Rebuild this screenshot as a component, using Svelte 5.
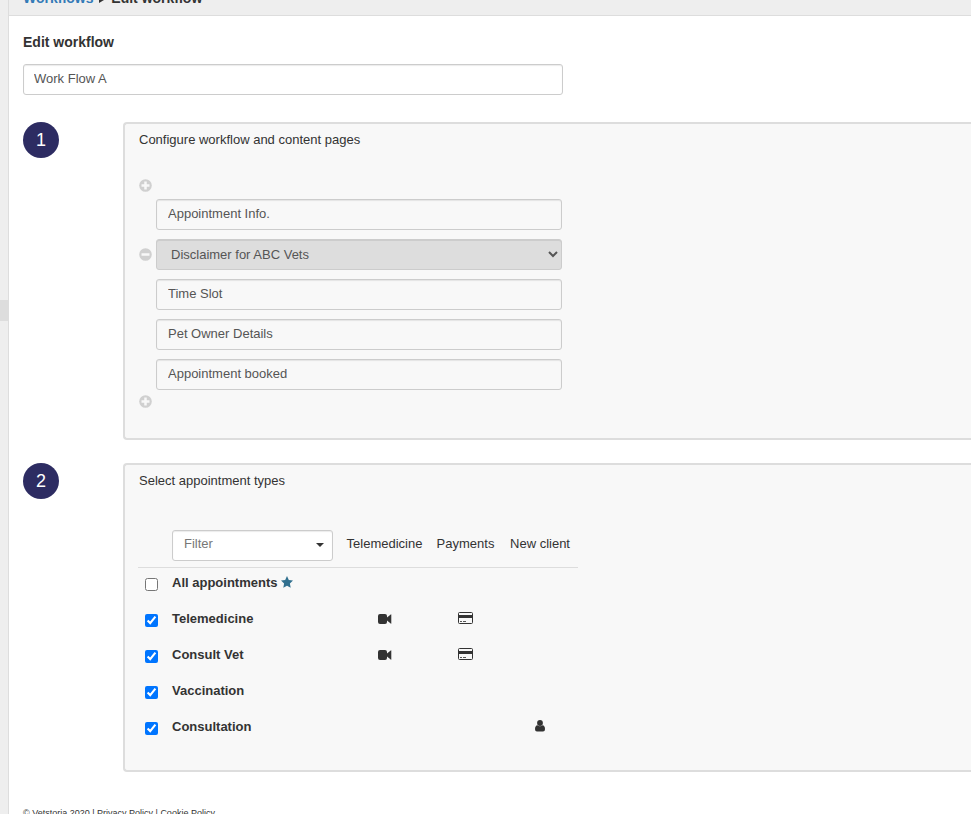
<script lang="ts">
  interface Step { label: string; editable?: boolean; }
  interface AppointmentType { name: string; checked: boolean; star?: boolean; video?: boolean; card?: boolean; newClient?: boolean; }

  let name = $state('Work Flow A');
  let filter = $state('');

  const steps: Step[] = [
    { label: 'Appointment Info.' },
    { label: 'Disclaimer for ABC Vets', editable: true },
    { label: 'Time Slot' },
    { label: 'Pet Owner Details' },
    { label: 'Appointment booked' },
  ];

  let types: AppointmentType[] = $state([
    { name: 'All appointments', checked: false, star: true },
    { name: 'Telemedicine', checked: true, video: true, card: true },
    { name: 'Consult Vet', checked: true, video: true, card: true },
    { name: 'Vaccination', checked: true },
    { name: 'Consultation', checked: true, newClient: true },
  ]);
</script>

{#snippet circle(minus: boolean)}
  <svg width="13" height="13" viewBox="0 0 13 13" aria-hidden="true">
    <circle cx="6.5" cy="6.5" r="6.3" fill="#d0d0d0" />
    <path d={minus ? 'M2.5 6.5h8' : 'M2.5 6.5h8M6.5 2.5v8'} stroke="#f8f8f8" stroke-width="2.5" />
  </svg>
{/snippet}

<div class="page">
  <aside><div class="handle"></div></aside>
  <div class="main">
    <header>
      <nav aria-label="Breadcrumb"><a href="#workflows">Workflows</a> <span class="sep"></span> <span>Edit workflow</span></nav>
    </header>
    <main>
      <h1><label for="name">Edit workflow</label></h1>
      <input id="name" class="control name" type="text" bind:value={name} />

      <section>
        <div class="number">1</div>
        <div class="panel">
          <h2>Configure workflow and content pages</h2>
          <div class="steps">
            <button type="button" aria-label="Add page at start">{@render circle(false)}</button>
            <div class="list">
              {#each steps as step (step.label)}
                <div class="step">
                  {#if step.editable}
                    <button type="button" aria-label="Remove page">{@render circle(true)}</button>
                    <select class="control page-select" aria-label="Content page">
                      <option>{step.label}</option>
                    </select>
                  {:else}
                    <input class="control" type="text" aria-label={step.label} value={step.label} readonly />
                  {/if}
                </div>
              {/each}
            </div>
            <button type="button" aria-label="Add page at end">{@render circle(false)}</button>
          </div>
        </div>
      </section>

      <section>
        <div class="number">2</div>
        <div class="panel">
          <h2>Select appointment types</h2>
          <table>
            <thead>
              <tr>
                <th class="check"></th>
                <th class="type">
                  <div class="filter">
                    <select class="control" aria-label="Filter" bind:value={filter}>
                      <option value="">Filter</option>
                    </select>
                    <svg width="8" height="4" viewBox="0 0 8 4" aria-hidden="true"><path d="M0 0h8L4 4z" fill="#333" /></svg>
                  </div>
                </th>
                <th class="tele">Telemedicine</th>
                <th class="pay">Payments</th>
                <th class="client">New client</th>
              </tr>
            </thead>
            <tbody>
              {#each types as type, i (type.name)}
                <tr>
                  <td class="check"><input id="type-{i}" type="checkbox" bind:checked={type.checked} /></td>
                  <td class="type">
                    <label for="type-{i}">{type.name}</label>
                    {#if type.star}
                      <svg width="12" height="12" viewBox="0 0 12 12" aria-hidden="true">
                        <path d="M6 0l1.8 3.9 4.2.6-3.1 3 .8 4.3L6 9.7l-3.7 2.1.8-4.3L0 4.500l4.200-.6z" fill="#31708f" />
                      </svg>
                    {/if}
                  </td>
                  <td>
                    {#if type.video}
                      <svg width="14" height="10" viewBox="0 0 14 10" role="img" aria-label="Telemedicine">
                        <path d="M2 0h5q2 0 2 2v1.500L12.700.4q.4-.3.6.1V9.500q-.2.500-.6.100L9 6.500V8q0 2-2 2H2Q0 10 0 8V2Q0 0 2 0z" fill="#333" />
                      </svg>
                    {/if}
                  </td>
                  <td class="pay">
                    {#if type.card}
                      <svg width="15" height="12" viewBox="0 0 15 12" role="img" aria-label="Payments">
                        <rect x=".5" y=".5" width="14" height="11" rx="1" fill="none" stroke="#333" />
                        <path d="M1 3h13v3H1z" fill="#333" />
                        <path d="M2 9.500h2M5 9.500h3" stroke="#555" />
                      </svg>
                    {/if}
                  </td>
                  <td class="client">
                    {#if type.newClient}
                      <svg width="10" height="12" viewBox="0 0 10 12" role="img" aria-label="New client">
                        <circle cx="5" cy="3" r="2.900" fill="#333" />
                        <path d="M2.500 5.300Q5 7.400 7.500 5.300 10 5.600 10 9.300q0 2.200-2 2.200H2q-2 0-2-2.200 0-3.700 2.500-4z" fill="#333" />
                      </svg>
                    {/if}
                  </td>
                </tr>
              {/each}
            </tbody>
          </table>
        </div>
      </section>

      <footer>© Vetstoria 2020 | <a href="#privacy">Privacy Policy</a> | <a href="#cookies">Cookie Policy</a></footer>
    </main>
  </div>
</div>

<style>
  :global(body) { margin: 0; }
  .page {
    display: flex; height: 100vh; overflow: hidden; background: #fff;
    font: 13px/18px "Liberation Sans", Arial, sans-serif; color: #333;
  }
  aside { flex: none; width: 8px; padding-top: 300px; background: #eee; border-right: 1px solid #ddd; }
  .handle { height: 21px; background: #ddd; }
  .main { flex: 1; min-width: 0; }

  header {
    display: flex; align-items: flex-end; height: 15px; padding: 0 14px;
    background: #eee; border-bottom: 1px solid #ddd; overflow: hidden;
  }
  nav { flex: none; padding-bottom: 8px; font-size: 14px; font-weight: 700; }
  nav a { color: #337ab7; text-decoration: none; }
  .sep { display: inline-block; margin: 0 3px 0 2px; border: 3px solid transparent; border-left: 5px solid #333; border-right: 0; }

  main { padding: 17px 0 0 14px; }
  h1 { margin: 0 0 13px; font-size: 14px; line-height: 18px; }
  h2 { margin: 0; font-size: 13px; font-weight: 400; line-height: 18px; }

  .control {
    box-sizing: border-box; display: block; width: 100%; height: 31px; margin: 0; padding: 0 11px 3px;
    border: 1px solid #ccc; border-radius: 3px; background: #f8f8f8;
    box-shadow: inset 0 1px 1px rgba(0, 0, 0, 0.08); font: inherit; color: #555;
  }
  .name { max-width: 540px; padding-left: 10px; background: #fff; }

  section { display: flex; align-items: flex-start; gap: 64px; margin-top: 27px; }
  section + section { margin-top: 23px; }
  .number {
    flex: none; width: 36px; border-radius: 50%; background: #2d2c62;
    color: #fff; font-size: 18px; line-height: 36px; text-align: center;
  }
  .panel {
    flex: 1; min-width: 0; padding: 7px 14px 22px;
    background: #f8f8f8; border: 2px solid #ddd; border-right: 0; border-radius: 4px 0 0 4px;
  }

  .steps { max-width: 423px; margin-top: 30px; padding-bottom: 8px; }
  .list { display: flex; flex-direction: column; gap: 9px; margin: 7px 0 5px; }
  .step { display: flex; align-items: center; justify-content: flex-end; gap: 4px; }
  .step .control { flex: none; width: calc(100% - 17px); }
  .step .page-select { padding: 0 0 1px 10px; background: #ddd; box-shadow: inset 0 1px 0 #ccc; }
  button { display: block; padding: 0; border: 0; background: none; cursor: pointer; }
  button svg { display: block; }

  table { width: 440px; margin: 40px 0 0 -1px; border-collapse: collapse; table-layout: fixed; }
  th { padding: 0 0 10px; border-bottom: 1px solid #ddd; font-weight: 400; }
  th.type { padding-bottom: 6px; }
  td { height: 36px; box-sizing: border-box; padding: 6px 0 0; vertical-align: top; text-align: center; }
  .check { width: 34px; }
  .type { width: 161px; text-align: left; }
  td.type { font-weight: 700; }
  .tele { width: 103px; }
  .pay { width: 59px; padding-right: 7px; }
  td svg { display: inline-block; vertical-align: -1px; }
  td input { display: block; width: 13px; height: 13px; margin: 4px 0 0 7px; }
  .filter { position: relative; }
  .filter .control { background: #fff; color: #777; appearance: none; }
  .filter svg { position: absolute; right: 9px; top: 13px; }

  footer { margin-top: 32px; font-size: 9px; line-height: 18px; }
  footer a { color: inherit; text-decoration: none; }
</style>
